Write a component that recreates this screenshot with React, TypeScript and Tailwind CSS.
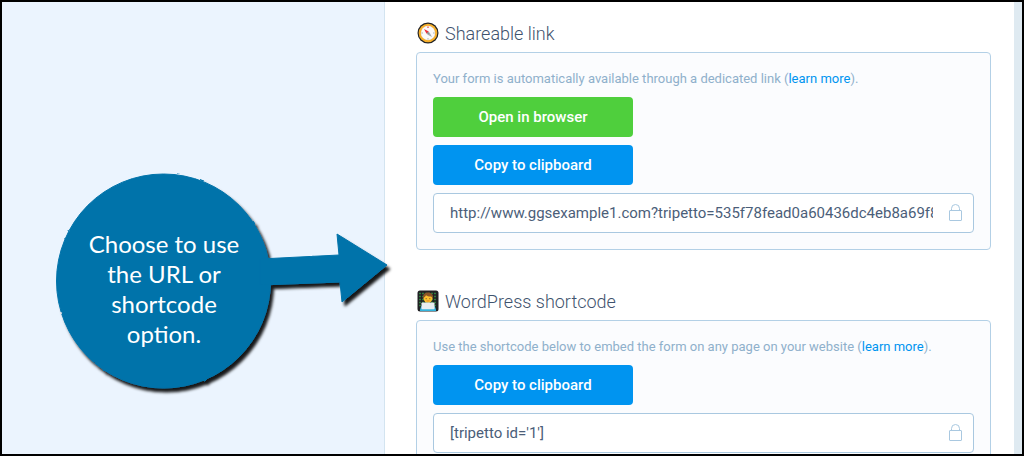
import type { ReactNode } from "react";

interface ShareSectionProps {
  icon: ReactNode;
  title: string;
  children: ReactNode;
}

const CompassIcon = () => (
  <svg className="w-[22px] h-[22px] shrink-0" viewBox="0 0 22 22" aria-hidden="true">
    <circle cx="11" cy="11" r="10.5" fill="#222326" />
    <circle cx="11" cy="11" r="9.3" fill="#f7b02c" />
    <circle cx="11" cy="11" r="7.2" fill="#e9e4e0" />
    <circle cx="11" cy="11" r="6.7" fill="#fbfafa" />
    <path d="M11 16v1.600M4.400 11H6M16 11h1.600" stroke="#b5b5b5" strokeWidth="1" />
    <path d="M11 4.400v1.600" stroke="#ee3b45" strokeWidth="1.2" />
    <path d="M7 7l4.800 2.600-2.200 2.200z" fill="#ee2f3d" />
    <path d="M15 15l-4.800-2.600 2.200-2.200z" fill="#a5a9ad" />
    <circle cx="11" cy="11" r="0.9" fill="#77797c" />
  </svg>
);

const TechnologistIcon = () => (
  <svg className="w-[22px] h-[22px] shrink-0" viewBox="0 0 22 22" aria-hidden="true">
    <rect x="0.5" y="0.5" width="21" height="21" rx="2.5" fill="#202124" />
    <path
      d="M2 3.500h18M2 6.500h18M2 9.500h18M2 12.500h18M2 15.500h18"
      stroke="#2f7d3d"
      strokeWidth="1.4"
      strokeDasharray="2 1"
    />
    <path d="M3 21c0-5 3-7.500 8-7.500s8 2.500 8 7.500z" fill="#35b4dc" />
    <circle cx="11" cy="8.200" r="4.500" fill="#fbc02d" />
    <path d="M6 8.500C5.400 4.600 7.600 2.400 11 2.400S16.600 4.600 16 8.500c-.7-1-1.400-1.700-2-2-1.800.2-3.600-.2-5-1.300C8.400 6.500 7 7.300 6 8.500z" fill="#8a5526" />
    <path d="M9.200 8.200v1M12.800 8.200v1" stroke="#5b4630" strokeWidth="0.9" />
    <path d="M9.500 10.900h3" stroke="#d5762b" strokeWidth="0.8" />
    <rect x="4.500" y="12.500" width="13" height="7" rx="0.8" fill="#e8edf0" />
    <path d="M3.500 19.500h15v1h-15z" fill="#35b4dc" />
  </svg>
);

const LockIcon = () => (
  <svg className="w-[14px] h-[18px] shrink-0" viewBox="0 0 14 18" fill="none" stroke="#a9c8e0" aria-hidden="true">
    <rect x="0.5" y="6.500" width="12" height="10" rx="0.5" />
    <path d="M2.500 6.500V4.500a4 4 0 0 1 8 0v2" />
  </svg>
);

const ShareSection = ({ icon, title, children }: ShareSectionProps) => (
  <section>
    <h2 className="flex items-center gap-[6px] h-[30px] pl-[1px] mb-1 text-[18px] font-light text-[#3f536e]">
      {icon}
      {title}
    </h2>
    <div className="flex flex-col items-start gap-2 rounded border border-[#b3d0e6] bg-[#fbfcfe] p-4">
      {children}
    </div>
  </section>
);

const Hint = ({ text }: { text: string }) => (
  <p className="text-[13px] leading-5 text-[#8fb0cb]">
    {text} (
    <a href="#" className="text-[#0094f0]">
      learn more
    </a>
    ).
  </p>
);

const ActionButton = ({ label, color }: { label: string; color: string }) => (
  <button type="button" className={`w-[200px] h-10 rounded text-[15px] font-medium text-white ${color}`}>
    {label}
  </button>
);

const LockedField = ({ label, value }: { label: string; value: string }) => (
  <label className="flex items-center gap-4 w-full h-10 rounded border border-[#a9c8e0] bg-white pl-4 pr-[10px]">
    <input
      type="text"
      readOnly
      aria-label={label}
      defaultValue={value}
      className="min-w-0 flex-1 bg-transparent text-[15px] text-[#4b5e79] outline-none"
    />
    <LockIcon />
  </label>
);

const Callout = () => (
  <div className="absolute left-12 top-[166px] w-[344px] h-[232px]">
    <svg className="absolute inset-0 w-full h-full overflow-visible" viewBox="0 0 344 232" aria-hidden="true">
      <defs>
        <filter id="rough" x="-5%" y="-5%" width="112%" height="112%">
          <feTurbulence type="fractalNoise" baseFrequency="0.12" numOctaves="1" seed="4" result="noise" />
          <feDisplacementMap
            in="SourceGraphic"
            in2="noise"
            scale="2"
            xChannelSelector="R"
            yChannelSelector="G"
            result="shape"
          />
          <feDropShadow in="shape" dx="3" dy="4" stdDeviation="1.800" floodColor="#000" floodOpacity="0.9" />
        </filter>
      </defs>
      <g filter="url(#rough)" fill="#0073aa" stroke="#0073aa" strokeLinejoin="round">
        <circle cx="113.500" cy="113" r="107" />
        <path d="M210 91L289 87 287 66 337 97 292 134 290 114 210 117z" />
      </g>
    </svg>
    <p className="relative w-[228px] pt-[61px] text-center font-[Lato,sans-serif] text-[24px] leading-[30px] text-white">
      Choose to use
      <br />
      the URL or
      <br />
      shortcode
      <br />
      option.
    </p>
  </div>
);

export default function App() {
  return (
    <div className="relative flex h-screen overflow-hidden border-2 border-black bg-white font-[Roboto,sans-serif]">
      <aside className="w-[383px] shrink-0 border-r border-[#d3e4f0] bg-[#ebf4fe]" />
      <main className="flex min-w-0 flex-1 flex-col gap-9 overflow-hidden pt-4 pl-[31px] pr-[23px]">
        <ShareSection icon={<CompassIcon />} title="Shareable link">
          <Hint text="Your form is automatically available through a dedicated link" />
          <ActionButton label="Open in browser" color="bg-[#4fcf3d]" />
          <ActionButton label="Copy to clipboard" color="bg-[#0094f0]" />
          <LockedField
            label="Shareable link"
            value="http://www.ggsexample1.com?tripetto=535f78fead0a60436dc4eb8a69f8c2d1"
          />
        </ShareSection>
        <ShareSection icon={<TechnologistIcon />} title="WordPress shortcode">
          <Hint text="Use the shortcode below to embed the form on any page on your website" />
          <ActionButton label="Copy to clipboard" color="bg-[#0094f0]" />
          <LockedField label="WordPress shortcode" value="[tripetto id='1']" />
        </ShareSection>
      </main>
      <div className="w-2 shrink-0 bg-[#dfeaf1]" />
      <Callout />
    </div>
  );
}
